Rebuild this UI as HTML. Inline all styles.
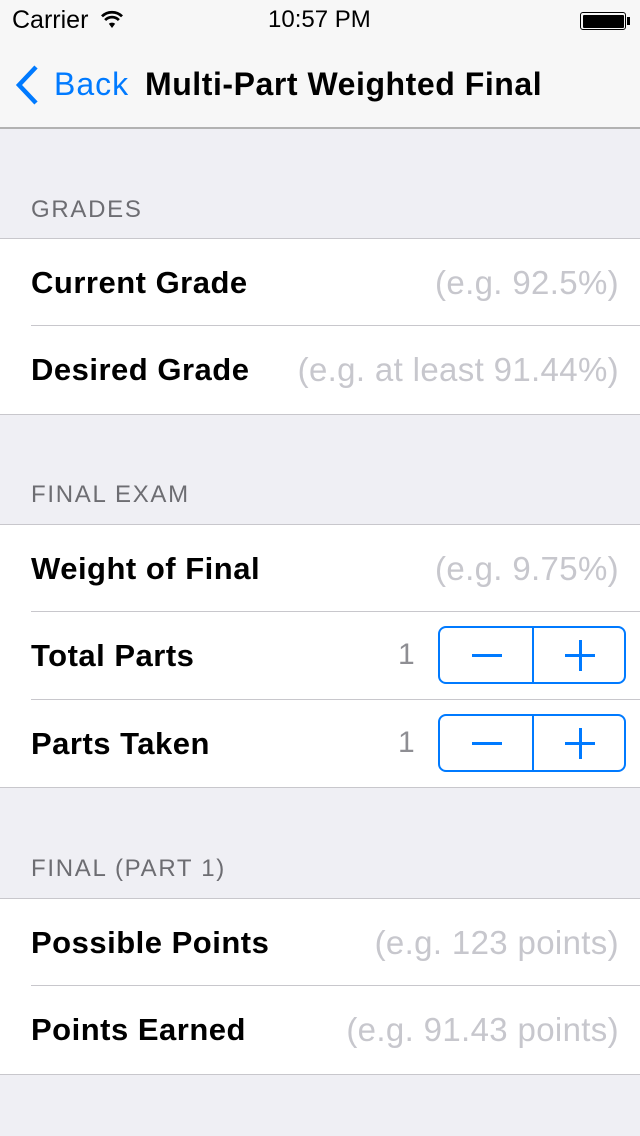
<!DOCTYPE html>
<html><head><meta charset="utf-8"><style>
*{margin:0;padding:0;box-sizing:border-box}
body{width:640px;height:1136px;background:#efeff4;font-family:"Liberation Sans",Arial,sans-serif;position:relative;overflow:hidden}
.nav{position:absolute;top:0;left:0;width:640px;height:129px;background:#f7f7f7;border-bottom:2px solid #b2b2b2}
.abs{position:absolute;white-space:nowrap}
.hdr{position:absolute;left:31px;font-size:24px;color:#6d6d72;letter-spacing:1.7px}
.grp{position:absolute;left:0;width:640px;background:#fff;border-top:1px solid #c8c7cc;border-bottom:1px solid #c8c7cc}
.row{position:relative;height:87.3px}
.row+.row:before{content:"";position:absolute;left:31px;right:0;top:-1px;border-top:1px solid #c8c7cc}
.lbl{position:absolute;left:31px;top:26px;font-size:31px;font-weight:bold;color:#000;letter-spacing:0.5px}
.ph{position:absolute;right:21px;top:25px;font-size:33px;color:#c7c7cd;letter-spacing:0.35px}
.num{position:absolute;left:398px;top:26px;font-size:30px;color:#8e8e93}
.st{position:absolute;left:438px;top:14px;width:188px;height:58px;border:2px solid #007aff;border-radius:8px}
.st .d{position:absolute;left:92px;top:0;bottom:0;border-left:2px solid #007aff}
.st .m{position:absolute;left:32px;top:26px;width:30px;height:3px;background:#007aff}
.st .p1{position:absolute;left:125px;top:26px;width:30px;height:3px;background:#007aff}
.st .p2{position:absolute;left:139px;top:12px;width:3px;height:31px;background:#007aff}
</style></head><body>
<div class="nav">
<div class="abs" style="left:12px;top:6px;font-size:25px">Carrier</div>
<svg class="abs" style="left:100px;top:10px" width="24" height="19" viewBox="0 0 22 18"><path d="M11 17l3-4a5 5 0 0 0-6 0z" fill="#000"/><path d="M4.5 9.5a9 9 0 0 1 13 0M1.5 6a13.5 13.5 0 0 1 19 0" stroke="#000" stroke-width="2.6" fill="none"/></svg>
<div class="abs" style="left:268px;top:6px;font-size:24px">10:57 PM</div>
<div class="abs" style="left:580px;top:12px;width:46px;height:18px;border:1.5px solid #000;border-radius:3px;padding:1.5px"><div style="background:#000;width:100%;height:100%;border-radius:1px"></div></div>
<div class="abs" style="left:627px;top:17px;width:3px;height:8px;background:#000"></div>
<svg class="abs" style="left:14px;top:64px" width="28" height="42" viewBox="0 0 28 42"><path d="M22 3L5 21l17 18" stroke="#007aff" stroke-width="4.5" fill="none"/></svg>
<div class="abs" style="left:54px;top:66px;font-size:32px;color:#007aff;letter-spacing:1px">Back</div>
<div class="abs" style="left:145px;top:66px;font-size:32px;font-weight:bold;color:#000;letter-spacing:0.55px">Multi-Part Weighted Final</div>
</div>

<div class="hdr" style="top:196px">GRADES</div>
<div class="grp" style="top:238px">
<div class="row"><div class="lbl">Current Grade</div><div class="ph">(e.g. 92.5%)</div></div>
<div class="row"><div class="lbl">Desired Grade</div><div class="ph">(e.g. at least 91.44%)</div></div>
</div>

<div class="hdr" style="top:481px">FINAL EXAM</div>
<div class="grp" style="top:524px">
<div class="row"><div class="lbl">Weight of Final</div><div class="ph">(e.g. 9.75%)</div></div>
<div class="row"><div class="lbl">Total Parts</div><div class="num">1</div><div class="st"><div class="d"></div><div class="m"></div><div class="p1"></div><div class="p2"></div></div></div>
<div class="row"><div class="lbl">Parts Taken</div><div class="num">1</div><div class="st"><div class="d"></div><div class="m"></div><div class="p1"></div><div class="p2"></div></div></div>
</div>

<div class="hdr" style="top:855px">FINAL (PART 1)</div>
<div class="grp" style="top:898px">
<div class="row"><div class="lbl">Possible Points</div><div class="ph">(e.g. 123 points)</div></div>
<div class="row"><div class="lbl">Points Earned</div><div class="ph">(e.g. 91.43 points)</div></div>
</div>
</body></html>
